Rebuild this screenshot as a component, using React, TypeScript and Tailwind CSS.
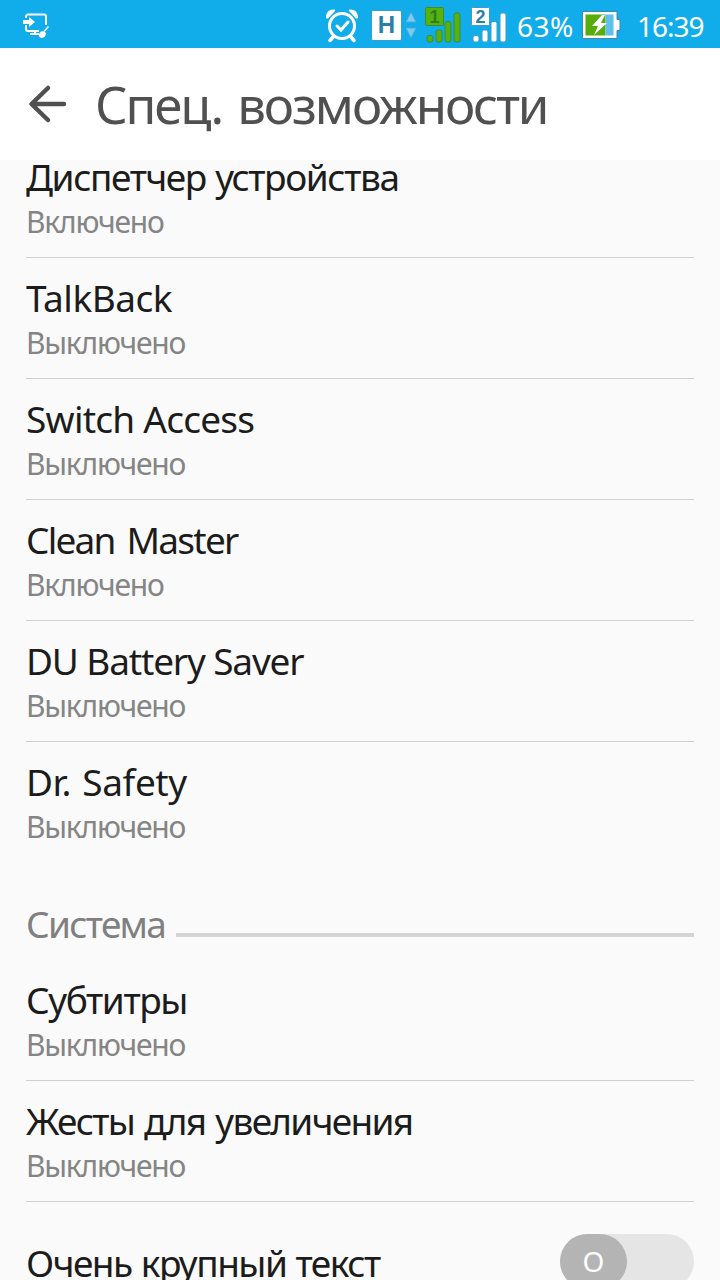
import { useState } from "react";
import clsx from "clsx";

type Service = {
  title: string;
  enabled: boolean;
  tracking: string;
};

const services: Service[] = [
  { title: "Диспетчер устройства", enabled: true, tracking: "tracking-[-1.4px] [word-spacing:1px]" },
  { title: "TalkBack", enabled: false, tracking: "tracking-[-0.5px]" },
  { title: "Switch Access", enabled: false, tracking: "tracking-[-0.75px]" },
  { title: "Clean Master", enabled: true, tracking: "tracking-[-1.75px] [word-spacing:4px]" },
  { title: "DU Battery Saver", enabled: false, tracking: "tracking-[-1.15px]" },
  { title: "Dr. Safety", enabled: false, tracking: "tracking-[-0.4px] [word-spacing:2px]" },
];

const system: Service[] = [
  { title: "Субтитры", enabled: false, tracking: "tracking-[-1.4px]" },
  { title: "Жесты для увеличения", enabled: false, tracking: "tracking-[-1.7px] [word-spacing:2px]" },
];

function RemoteIcon() {
  return (
    <svg className="shrink-0" width="28" height="26" viewBox="0 0 28 26" fill="none" stroke="white" strokeWidth="2">
      <path d="M4 6V4.500a2 2 0 0 1 2-2h16a2 2 0 0 1 2 2V13M4 13v4a2 2 0 0 0 2 2H17" />
      <path d="M13 19v3M8 22h9" />
      <path d="M1 8h6V5l6 5-6 5v-3H1z" fill="white" stroke="none" />
      <path d="M26.500 14.500l-4.500 5" strokeWidth="1.500" />
      <path d="M18 20c2-1.500 5-1 6 1.500-.5 3-2.500 4.500-4.500 4.500-2-.5-3-2-2.500-3.500z" fill="white" stroke="none" />
    </svg>
  );
}

function AlarmIcon() {
  return (
    <svg className="shrink-0" width="36" height="36" viewBox="0 0 36 36" fill="none" stroke="white" strokeLinecap="round">
      <circle cx="18" cy="19" r="12.500" strokeWidth="3" />
      <path d="M13 19l4 4 7-8" strokeWidth="3" />
      <path d="M9 30l-3 3.500M27 30l3 3.500" strokeWidth="3.500" />
      <path d="M2 10.500C2 5 5.500 2 10.500 2.500c1 .5 1 1.500 0 2L4.500 11c-1 1-2.500.5-2.500-.5zM34 10.500C34 5 30.500 2 25.500 2.500c-1 .5-1 1.500 0 2L31.500 11c1 1 2.500.5 2.500-.5z" fill="white" stroke="none" />
    </svg>
  );
}

function DataArrows() {
  return (
    <svg className="shrink-0" width="12" height="28" viewBox="0 0 12 28" fill="#79cdf3" stroke="#4fa9d2" strokeWidth="1">
      <path d="M6 1l5 10H1z" />
      <path d="M6 27l5-10H1z" />
    </svg>
  );
}

function Signal({ sim, color, ink, outline }: { sim: string; color: string; ink: string; outline: string }) {
  return (
    <svg className="shrink-0" width="37" height="37" viewBox="0 0 37 37" fill={color} stroke={outline} strokeWidth="1">
      <rect x="2" y="28.500" width="6" height="6.500" rx="2" />
      <rect x="11" y="23" width="6" height="12" rx="2" />
      <rect x="20" y="14.500" width="6" height="20.500" rx="2" />
      <rect x="29" y="6" width="6" height="29" rx="2" />
      <rect x="0.500" y="0.500" width="18" height="18" rx="1" />
      <text x="9.500" y="15.500" textAnchor="middle" fill={ink} stroke="none" fontSize="18" fontWeight="700" fontFamily="Liberation Sans, sans-serif">
        {sim}
      </text>
    </svg>
  );
}

function BatteryIcon() {
  return (
    <svg className="shrink-0" width="39" height="28" viewBox="0 0 39 28">
      <path d="M.5.5h34.500v8h3v11h-3v8H.5z" fill="white" stroke="#3f88a8" />
      <rect x="3.500" y="3.500" width="20" height="21" fill="#57ab0a" />
      <rect x="23.500" y="3.500" width="8" height="21" fill="#5fc0ec" />
      <path d="M20 4L10 15h6l-4 9 13-12h-6l4-8z" fill="white" />
    </svg>
  );
}

function BackArrow() {
  return (
    <svg className="shrink-0" width="40" height="40" viewBox="0 0 40 40" fill="none" stroke="#505050" strokeWidth="4.500" strokeLinecap="round" strokeLinejoin="round">
      <path d="M21 4L4.500 20 21 36M5 20h32" />
    </svg>
  );
}

function StatusBar() {
  return (
    <header className="flex h-12 shrink-0 items-center bg-[#11adea] pt-0.5 pr-4 pl-[22px] text-white">
      <RemoteIcon />
      <div className="ml-auto flex items-center">
        <AlarmIcon />
        <div className="ml-[11px] flex h-[31px] w-[31px] items-center justify-center rounded-xs border border-[#3f9cc4] bg-white font-['Liberation_Sans',sans-serif] text-[24px] font-bold text-[#2b7fa8]">
          H
        </div>
        <div className="ml-[3px]">
          <DataArrows />
        </div>
        <div className="ml-[8px]">
          <Signal sim="1" color="#56b30c" ink="#2f7d24" outline="#3d8a3c" />
        </div>
        <div className="ml-[9px]">
          <Signal sim="2" color="#ffffff" ink="#2b7fa8" outline="#3c9cc8" />
        </div>
        <span className="ml-[9px] w-[58px] pt-px text-[28px] tracking-[0.5px]">63%</span>
        <div className="ml-[7px]">
          <BatteryIcon />
        </div>
        <span className="ml-[16px] w-[67px] pt-px text-[28px] tracking-[-1px]">16:39</span>
      </div>
    </header>
  );
}

function ServiceRow({ item, last }: { item: Service; last: boolean }) {
  return (
    <li className={clsx("h-[121px] pt-4", !last && "border-b border-[#cfcfcf]")}>
      <div className={clsx("text-[37px] leading-[48px] whitespace-nowrap text-[#1c1c1c]", item.tracking)}>
        {item.title}
      </div>
      <div className="mt-px text-[30px] leading-10 tracking-[-1.2px] text-[#858585]">
        {item.enabled ? "Включено" : "Выключено"}
      </div>
    </li>
  );
}

export default function App() {
  const [largeText, setLargeText] = useState(false);

  return (
    <div className="flex h-screen w-full flex-col overflow-hidden bg-[#fafafa] font-['Noto_Sans',sans-serif]">
      <StatusBar />

      {/* Title bar */}
      <div className="z-10 flex h-28 shrink-0 items-center bg-white pl-[27px]">
        <BackArrow />
        <h1 className="ml-[28px] text-[51px] tracking-[-2.1px] [word-spacing:4px] whitespace-nowrap text-[#505050]">
          Спец. возможности
        </h1>
      </div>

      {/* Settings list, scrolled a little */}
      <main className="min-h-0 flex-1 overflow-hidden px-[26px]">
        <ul className="-mt-[23px]">
          {services.map((item, i) => (
            <ServiceRow key={item.title} item={item} last={i === services.length - 1} />
          ))}
        </ul>

        <div className="flex h-[97px] items-start pt-[35px]">
          <h2 className="w-[150px] pt-px text-[37px] leading-[50px] tracking-[-1.7px] text-[#808080]">Система</h2>
          <div className="mt-[35px] h-1 flex-1 bg-[#d4d4d4]" />
        </div>

        <ul>
          {system.map((item) => (
            <ServiceRow key={item.title} item={item} last={false} />
          ))}
        </ul>

        <div className="flex items-start justify-between pt-8">
          <span className="mt-[5px] text-[37px] leading-[48px] tracking-[-1.5px] [word-spacing:1px] whitespace-nowrap text-[#1c1c1c]">
            Очень крупный текст
          </span>
          <button
            role="switch"
            aria-checked={largeText}
            onClick={() => setLargeText(!largeText)}
            className={clsx("flex h-[55px] w-[134px] rounded-full bg-[#e5e5e5]", largeText && "justify-end")}
          >
            <span className="flex h-[55px] w-[67px] items-center justify-center rounded-full bg-[#b4b4b4] pb-0.5 text-[28px] text-white">
              O
            </span>
          </button>
        </div>
      </main>
    </div>
  );
}
